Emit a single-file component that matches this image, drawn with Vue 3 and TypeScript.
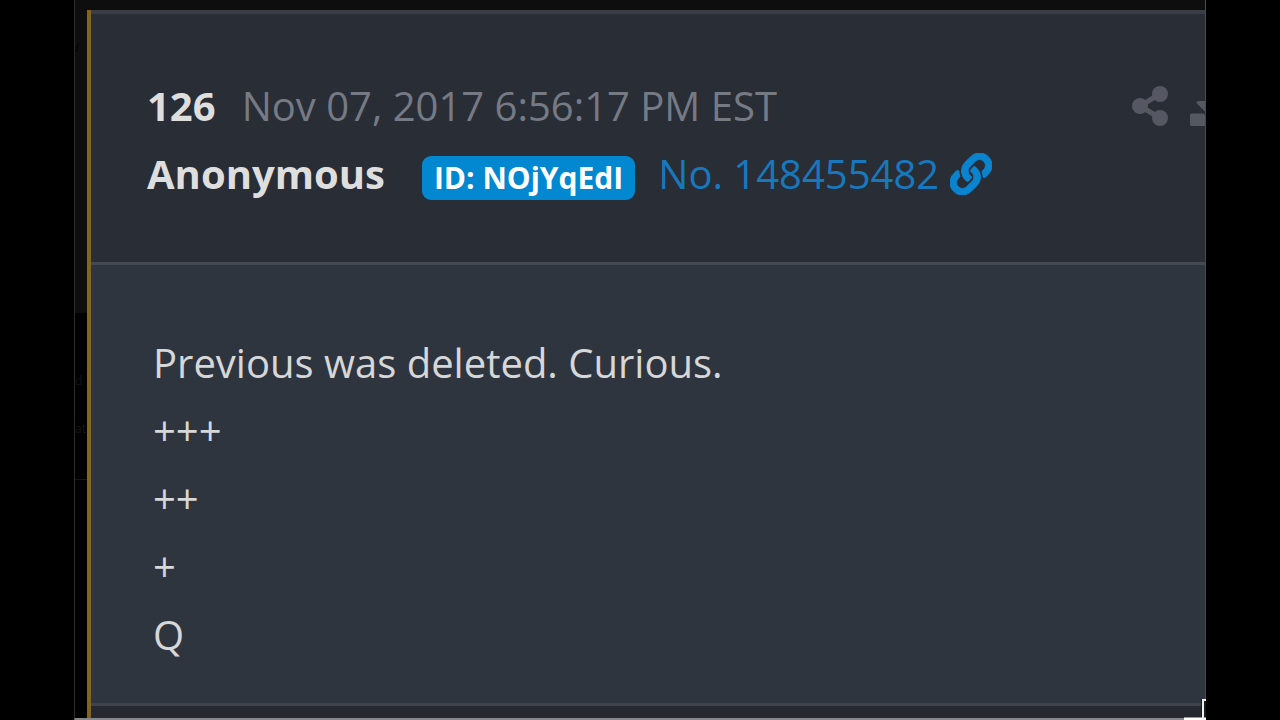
<script setup lang="ts">
interface Post {
  index: number
  date: string
  author: string
  userId: string
  postNumber: string
  lines: string[]
}

const post: Post = {
  index: 126,
  date: 'Nov 07, 2017 6:56:17 PM EST',
  author: 'Anonymous',
  userId: 'NOjYqEdI',
  postNumber: '148455482',
  lines: ['Previous was deleted. Curious.', '+++', '++', '+', 'Q'],
}
</script>

<template>
  <main class="stage">
    <div class="viewport">
      <aside class="gutter" aria-hidden="true">
        <div class="gutter-top">/</div>
        <div class="gutter-bottom">
          <span>d</span>
          <span>at</span>
          <span class="rule"></span>
        </div>
      </aside>
      <article class="card">
        <header class="head">
          <div class="row">
            <strong class="index">{{ post.index }}</strong>
            <time class="date">{{ post.date }}</time>
            <div class="actions">
              <button type="button" class="action" aria-label="Share">
                <svg viewBox="0 0 36 40" width="36" height="40">
                  <path d="M28 8 8 20l20 12" fill="none" stroke="currentColor" stroke-width="5" />
                  <circle cx="8" cy="20" r="8" />
                  <circle cx="28" cy="8" r="8" />
                  <circle cx="28" cy="32" r="8" />
                </svg>
              </button>
              <button type="button" class="action" aria-label="Download">
                <svg viewBox="0 0 512 512" width="40" height="40">
                  <path d="M216 0h80c13.3 0 24 10.7 24 24v168h87.7c17.8 0 26.7 21.5 14.1 34.1L269.7 378.3c-7.5 7.5-19.8 7.5-27.3 0L90.1 226.1c-12.6-12.6-3.7-34.1 14.1-34.1H192V24c0-13.3 10.7-24 24-24zm296 376v112c0 13.3-10.7 24-24 24H24c-13.3 0-24-10.7-24-24V376c0-13.3 10.7-24 24-24h146.7l49 49c20.1 20.1 52.5 20.1 72.6 0l49-49H488c13.3 0 24 10.7 24 24z" />
                </svg>
              </button>
            </div>
          </div>
          <div class="row">
            <strong class="author">{{ post.author }}</strong>
            <span class="badge">ID: {{ post.userId }}</span>
            <a class="link" href="#post">
              No. {{ post.postNumber }}
              <svg class="chain" viewBox="0 0 512 512" width="42" height="42" aria-hidden="true">
                <path d="M326.612 185.391c59.747 59.809 58.927 155.698.36 214.59-.11.12-.24.25-.36.37l-67.2 67.2c-59.27 59.27-155.699 59.262-214.96 0-59.27-59.26-59.27-155.7 0-214.96l37.106-37.106c9.84-9.84 26.786-3.3 27.294 10.606.648 17.722 3.826 35.527 9.69 52.721 1.986 5.822.567 12.262-3.783 16.612l-13.087 13.087c-28.026 28.026-28.905 73.66-1.155 101.96 28.024 28.579 74.086 28.749 102.325.51l67.2-67.19c28.191-28.191 28.073-73.757 0-101.83-3.701-3.694-7.429-6.564-10.341-8.569a16.037 16.037 0 0 1-6.947-12.606c-.396-10.567 3.348-21.456 11.698-29.806l21.054-21.055c5.521-5.521 14.182-6.199 20.584-1.731a152.482 152.482 0 0 1 20.522 17.197zM467.547 44.449c-59.261-59.262-155.69-59.27-214.96 0l-67.2 67.2c-.12.12-.25.25-.36.37-58.566 58.892-59.387 154.781.36 214.59a152.454 152.454 0 0 0 20.521 17.196c6.402 4.468 15.064 3.789 20.584-1.731l21.054-21.055c8.35-8.35 12.094-19.239 11.698-29.806a16.037 16.037 0 0 0-6.947-12.606c-2.912-2.005-6.64-4.875-10.341-8.569-28.073-28.073-28.191-73.639 0-101.83l67.2-67.19c28.239-28.239 74.3-28.069 102.325.51 27.75 28.3 26.872 73.934-1.155 101.96l-13.087 13.087c-4.35 4.35-5.769 10.79-3.783 16.612 5.864 17.194 9.042 34.999 9.69 52.721.509 13.906 17.454 20.446 27.294 10.606l37.106-37.106c59.271-59.259 59.271-155.699.001-214.959z" />
              </svg>
            </a>
          </div>
        </header>
        <section id="post" class="body">
          <p v-for="(line, i) in post.lines" :key="i">{{ line }}</p>
        </section>
        <footer class="foot"></footer>
      </article>
      <svg class="corner" viewBox="0 0 22 21" width="22" height="21" aria-hidden="true">
        <path d="M20 21V2h2" fill="none" stroke="#17191d" stroke-width="6" />
        <path d="M0 20h22" stroke="#ffffff" stroke-width="3" />
        <path d="M19 21V1h3" fill="none" stroke="#f0f0f0" stroke-width="2" />
      </svg>
    </div>
  </main>
</template>

<style>
body {
  margin: 0;
  background: #000;
}
</style>

<style scoped>
.stage {
  display: flex;
  min-height: 100vh;
  box-sizing: border-box;
  padding: 0 74px;
  background: #000;
  font-family: 'Open Sans', 'Noto Sans', sans-serif;
  font-size: 40px;
  line-height: 68px;
}

.viewport {
  position: relative;
  display: flex;
  flex: 1;
  min-width: 0;
  box-sizing: border-box;
  padding-top: 10px;
  background: #0e0e0e;
  border-left: 1px solid #2c2c2d;
  border-right: 1px solid #4a4c52;
  border-bottom: 2px solid #85878c;
}

.gutter {
  display: flex;
  flex-direction: column;
  flex: none;
  width: 12px;
  font-size: 12px;
  line-height: 48px;
}

.gutter-top {
  height: 303px;
  box-sizing: border-box;
  padding-top: 14px;
  color: #000;
}

.gutter-bottom {
  display: flex;
  flex: 1;
  flex-direction: column;
  padding-top: 44px;
  background: #000;
  color: #161616;
}

.rule {
  margin-top: 26px;
  border-top: 1px solid #161616;
}

.card {
  display: flex;
  flex: 1;
  flex-direction: column;
  min-width: 0;
  overflow: hidden;
  border-left: 4px solid #836420;
  background: #2f353f;
}

.head {
  padding: 58px 0 54px 56px;
  border-top: 4px solid #3a3d45;
  border-bottom: 3px solid #454951;
  background: #292d35;
}

.row {
  display: flex;
  align-items: center;
  height: 68px;
  white-space: nowrap;
}

.index,
.author {
  font-weight: 700;
  color: #dedede;
}

.date {
  margin-left: 26px;
  color: #757a85;
}

.actions {
  display: flex;
  gap: 22px;
  margin-left: auto;
  margin-right: -25px;
}

.action {
  display: flex;
  padding: 0;
  border: 0;
  background: none;
  color: #555863;
}

.action svg,
.chain {
  display: block;
  fill: currentColor;
}

.chain path {
  stroke: currentColor;
  stroke-width: 12;
}

.badge {
  margin-left: 37px;
  margin-top: 8px;
  padding: 0 12px;
  border-radius: 9px;
  background: #0288d1;
  color: #fff;
  font-size: 30px;
  font-weight: 700;
  line-height: 44px;
}

.link {
  display: flex;
  gap: 11px;
  align-items: center;
  margin-left: 23px;
  color: #1878bd;
  text-decoration: none;
}

.chain {
  color: #0b84cf;
}

.body {
  flex: 1;
  padding: 64px 62px 34px;
  color: #d6d7d8;
}

.body p {
  margin: 0;
}

.foot {
  height: 12px;
  border-top: 3px solid #3f434b;
  background: #25282f;
}

.corner {
  position: absolute;
  right: -1px;
  bottom: -2px;
}
</style>
